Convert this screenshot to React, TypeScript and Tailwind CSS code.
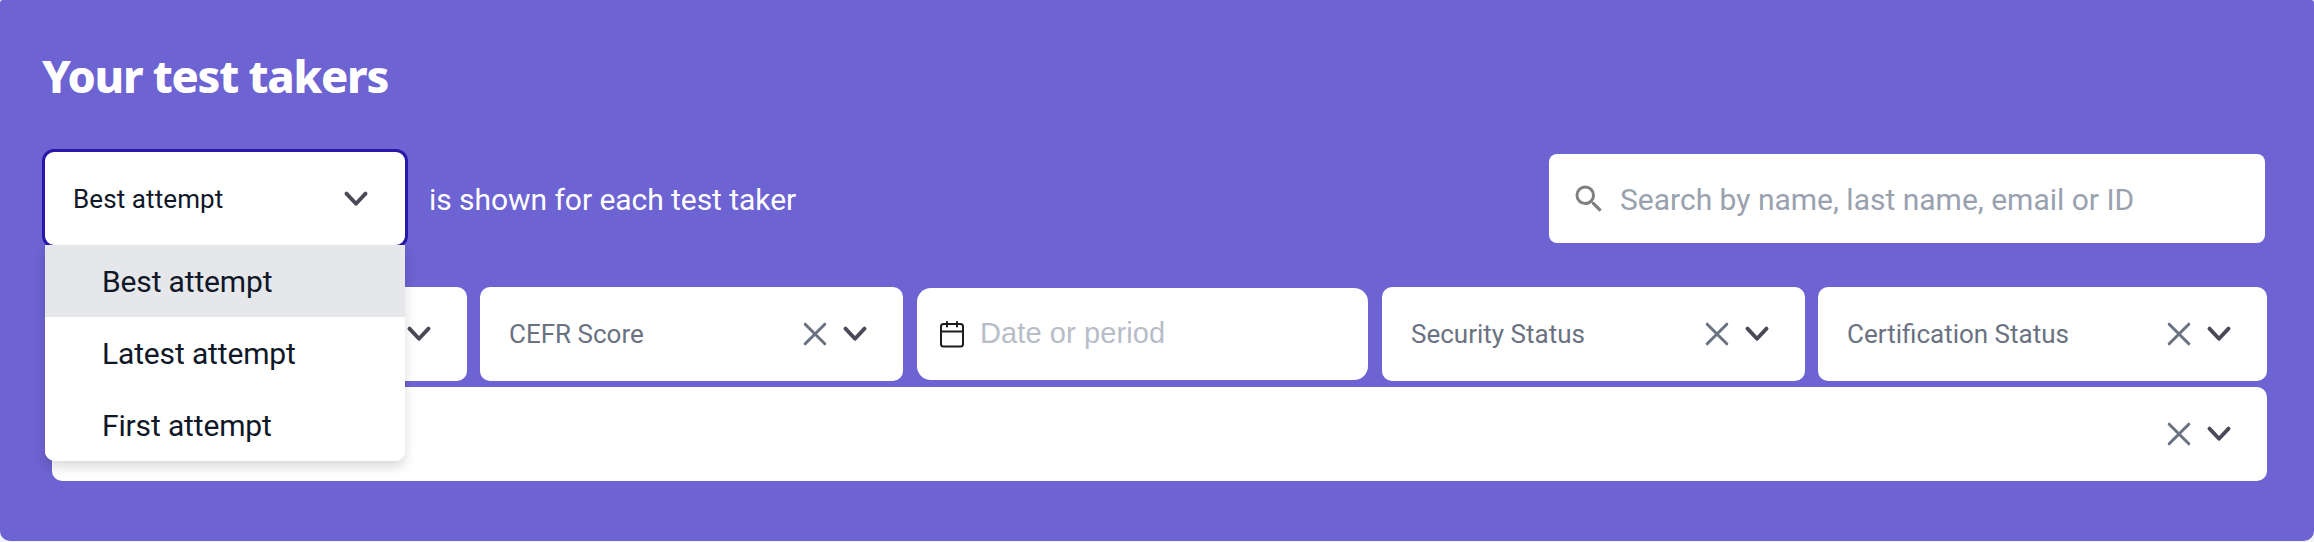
import { useState } from "react";
import { MdSearch } from "react-icons/md";

const attempts = ["Best attempt", "Latest attempt", "First attempt"];

function Chevron() {
  return (
    <svg className="w-6 h-6 shrink-0 text-[#4b4858]" fill="none" stroke="currentColor" viewBox="0 0 24 24">
      <path strokeLinecap="round" strokeLinejoin="round" strokeWidth={3.8} d="M2.5 6.6l9.5 10.2 9.5-10.2" />
    </svg>
  );
}

function Clear() {
  return (
    <svg className="w-6 h-6 shrink-0 text-gray-500" fill="none" stroke="currentColor" viewBox="0 0 24 24">
      <path strokeLinecap="round" strokeWidth={3} d="M2.2 2.2l19.6 19.6M21.8 2.2L2.2 21.8" />
    </svg>
  );
}

function FilterSelect({ label, className }: { label?: string; className: string }) {
  return (
    <div className={`h-[94px] bg-white rounded-[10px] pl-[29px] pr-9 flex items-center justify-between ${className}`}>
      <span className="pt-px text-[26px] text-gray-500 whitespace-nowrap">{label}</span>
      <div className="flex items-center gap-4">
        <Clear />
        <Chevron />
      </div>
    </div>
  );
}

export default function App() {
  const [selected, setSelected] = useState(attempts[0]);

  return (
    <div className="h-[542px] bg-[#f3f3fb] font-['Roboto',sans-serif]">
      <div className="h-[541px] bg-[#6d63d2] rounded-t-[3px] rounded-b-[10px] overflow-hidden">
        <h1 className="h-[149px] pl-[42px] pt-[49px] text-[45px] leading-[53px] font-extrabold text-white font-['Noto_Sans',sans-serif]">
          <span className="tracking-[-1.25px]">Your test takers</span>
        </h1>

        {/* Attempt picker and search */}
        <div className="h-[138px] pl-[42px] pr-[49px] flex items-start justify-between">
          <div className="flex items-center">
            <div className="relative w-[366px] h-[99px] bg-white border-3 border-[#2818a8] rounded-[12px]">
              <button className="w-full h-[93px] pl-7 pr-[37px] flex items-center justify-between">
                <span className="pt-[2px] text-[26px] tracking-[0.1px] text-gray-900">{selected}</span>
                <Chevron />
              </button>
              <ul className="absolute z-10 top-[93px] left-0 w-[360px] bg-white rounded-b-[10px] overflow-hidden shadow-[0_6px_12px_rgba(0,0,0,0.15)]">
                {attempts.map((attempt) => (
                  <li
                    key={attempt}
                    onClick={() => setSelected(attempt)}
                    className={`h-[72px] pl-[57px] pt-px flex items-center text-[30px] tracking-[-0.15px] text-gray-900 ${
                      attempt === selected ? "bg-gray-200" : "bg-white"
                    }`}
                  >
                    {attempt}
                  </li>
                ))}
              </ul>
            </div>
            <span className="pl-[21px] pt-px text-[30px] tracking-[-0.05px] text-white">is shown for each test taker</span>
          </div>
          <div className="mt-[5px] w-[716px] h-[89px] bg-white rounded-lg pl-[22px] flex items-center">
            <MdSearch className="w-9 h-9 text-[#7f7f7f]" />
            <span className="pl-[13px] pt-px text-[30px] text-gray-400">Search by name, last name, email or ID</span>
          </div>
        </div>

        {/* Filters */}
        <div className="pl-[52px] flex items-center">
          <FilterSelect className="w-[415px]" />
          <FilterSelect label="CEFR Score" className="ml-[13px] w-[423px]" />
          <div className="ml-[14px] w-[451px] h-[92px] bg-white rounded-[14px] pl-[22px] flex items-center">
            <svg className="w-[26px] h-7 text-[#1c1c1e]" fill="none" stroke="currentColor" viewBox="0 0 26 28">
              <rect x="2" y="4" width="22" height="22.5" rx="2.5" strokeWidth={2} />
              <path strokeWidth={2} d="M2 11.5h22" />
              <path strokeLinecap="round" strokeWidth={2} d="M8 2v4.5M18 2v4.5" />
            </svg>
            <span className="pl-[15px] text-[29px] tracking-[0.1px] text-[#b7bdc8] font-['Liberation_Sans',sans-serif]">Date or period</span>
          </div>
          <FilterSelect label="Security Status" className="ml-[14px] w-[423px]" />
          <FilterSelect label="Certification Status" className="ml-[13px] w-[449px]" />
        </div>
        <div className="mt-[6px] pl-[52px] pr-[47px]">
          <FilterSelect className="w-full" />
        </div>
      </div>
    </div>
  );
}
